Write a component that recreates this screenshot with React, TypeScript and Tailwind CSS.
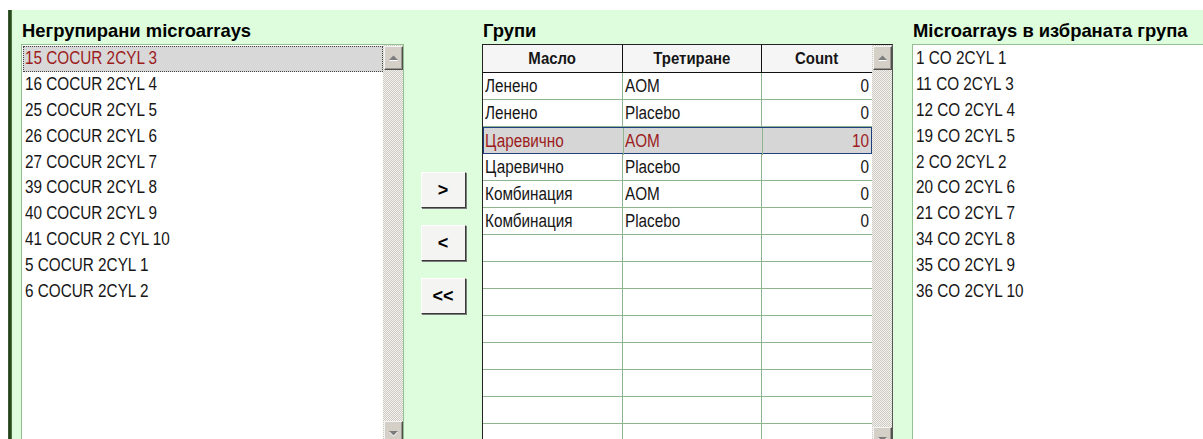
import React from "react";

const leftItems = [
  "15 COCUR 2CYL 3",
  "16 COCUR 2CYL 4",
  "25 COCUR 2CYL 5",
  "26 COCUR 2CYL 6",
  "27 COCUR 2CYL 7",
  "39 COCUR 2CYL 8",
  "40 COCUR 2CYL 9",
  "41 COCUR 2 CYL 10",
  "5 COCUR 2CYL 1",
  "6 COCUR 2CYL 2",
];

const rightItems = [
  "1 CO 2CYL 1",
  "11 CO 2CYL 3",
  "12 CO 2CYL 4",
  "19 CO 2CYL 5",
  "2 CO 2CYL 2",
  "20 CO 2CYL 6",
  "21 CO 2CYL 7",
  "34 CO 2CYL 8",
  "35 CO 2CYL 9",
  "36 CO 2CYL 10",
];

const groups = [
  { oil: "Ленено", treat: "AOM", count: 0 },
  { oil: "Ленено", treat: "Placebo", count: 0 },
  { oil: "Царевично", treat: "AOM", count: 10, selected: true },
  { oil: "Царевично", treat: "Placebo", count: 0 },
  { oil: "Комбинация", treat: "AOM", count: 0 },
  { oil: "Комбинация", treat: "Placebo", count: 0 },
];

const EMPTY_ROWS = 8;

// Narrow text: Arial metrics squeezed horizontally
function N({ children, right }: { children: React.ReactNode; right?: boolean }) {
  return (
    <span
      className={
        right
          ? "inline-block origin-right scale-x-[0.85] whitespace-nowrap"
          : "inline-block origin-left scale-x-[0.85] whitespace-nowrap"
      }
    >
      {children}
    </span>
  );
}

function ArrowButton({ dir }: { dir: "up" | "down" }) {
  return (
    <div className="flex h-[24px] w-[19px] items-center justify-center border border-t-[#f4f4f4] border-l-[#f4f4f4] border-r-[#505050] border-b-[#505050] bg-[#d4d0c8] shadow-[inset_-1px_-1px_0_#9a968e]">
      <svg width="11" height="8" viewBox="0 0 11 8">
        {dir === "up" ? (
          <>
            <path d="M1 6 L5.5 1.5 L10 6 Z" fill="#ffffff" transform="translate(0 1)" />
            <path d="M1 6 L5.5 1.5 L10 6 Z" fill="#7c7c7c" />
          </>
        ) : (
          <>
            <path d="M1 2 L5.5 6.5 L10 2 Z" fill="#ffffff" transform="translate(0 1)" />
            <path d="M1 2 L5.5 6.5 L10 2 Z" fill="#7c7c7c" />
          </>
        )}
      </svg>
    </div>
  );
}

function ScrollBar() {
  return (
    <div className="flex w-[20px] shrink-0 flex-col justify-between bg-[repeating-conic-gradient(#cdcac3_0_25%,#f3f2ef_0_50%)] bg-[length:2px_2px] pt-px pl-px">
      <ArrowButton dir="up" />
      <ArrowButton dir="down" />
    </div>
  );
}

function Heading({ children }: { children: React.ReactNode }) {
  return (
    <div className="h-[34px] shrink-0 pt-[11px] pl-px font-['Liberation_Sans',Arial,sans-serif] text-[18.4px] font-bold leading-[20px] text-black whitespace-nowrap">
      {children}
    </div>
  );
}

function SideButton({ label }: { label: string }) {
  return (
    <button className="flex h-[36px] w-[45px] items-center justify-center border border-t-white border-l-white border-r-[#3a3a3a] border-b-[#3a3a3a] bg-[#f4f4f2] shadow-[1px_1px_0_#7a7a7a] font-['Liberation_Sans',Arial,sans-serif] text-[18px] font-bold text-black">
      {label}
    </button>
  );
}

export default function App() {
  const body = "font-['Liberation_Sans',Arial,sans-serif]";
  return (
    <div className="h-[439px] w-[1203px] overflow-hidden bg-white pt-[10px] pl-[8px]">
      <div className="flex h-[436px] bg-[#ddfddd]">
        <div className="w-[4px] shrink-0 bg-[linear-gradient(to_right,#45663a,#1c3614,#5b8a4a)]" />

        {/* unassigned microarrays */}
        <div className="ml-[9px] flex w-[383px] shrink-0 flex-col">
          <Heading>Негрупирани microarrays</Heading>
          <div className="flex flex-1 border border-[#93bf93] bg-white">
            <div className={`flex-1 pt-px pl-px text-[18px] text-[#161616] ${body}`}>
              {leftItems.map((t, i) => (
                <div
                  key={t}
                  className={
                    i === 0
                      ? "flex h-[25.8px] items-center border border-dotted border-[#444] bg-[#d8d8d8] pl-px text-[#9c1c1c]"
                      : "flex h-[25.8px] items-center border border-transparent pl-px"
                  }
                >
                  <N>{t}</N>
                </div>
              ))}
            </div>
            <ScrollBar />
          </div>
        </div>

        {/* move buttons */}
        <div className="flex w-[78px] shrink-0 flex-col items-center gap-[17px] pt-[162px]">
          <SideButton label=">" />
          <SideButton label="<" />
          <SideButton label="<<" />
        </div>

        {/* groups table */}
        <div className="flex w-[411px] shrink-0 flex-col">
          <Heading>Групи</Heading>
          <div className="flex flex-1 border border-t-[#222] border-l-[#222] border-r-[#555] border-b-[#555] bg-white">
            <div className={`flex-1 text-[18px] text-[#161616] ${body}`}>
              <div className="grid h-[28px] grid-cols-[140px_139px_1fr] border-b border-[#111] bg-[#f5f5f5] text-[17px] font-bold">
                <div className="flex items-center justify-center border-r border-[#111]">
                  <span className="inline-block scale-x-[0.88]">Масло</span>
                </div>
                <div className="flex items-center justify-center border-r border-[#111]">
                  <span className="inline-block scale-x-[0.88]">Третиране</span>
                </div>
                <div className="flex items-center justify-center">
                  <span className="inline-block scale-x-[0.88]">Count</span>
                </div>
              </div>
              {groups.map((g, i) =>
                g.selected ? (
                  <div
                    key={i}
                    className="grid h-[27px] grid-cols-[140px_139px_1fr] border border-[#1e3f80] bg-[#d6d6d6] text-[#9c1c1c]"
                  >
                    <div className="flex items-center border-r border-[#8fb58f] pl-px"><N>{g.oil}</N></div>
                    <div className="flex items-center border-r border-[#8fb58f] pl-px"><N>{g.treat}</N></div>
                    <div className="flex items-center justify-end pr-[2px]"><N right>{g.count}</N></div>
                  </div>
                ) : (
                  <div
                    key={i}
                    className="grid h-[27px] grid-cols-[140px_139px_1fr] border-b border-[#8fb58f]"
                  >
                    <div className="flex items-center border-r border-[#8fb58f] pl-[2px]"><N>{g.oil}</N></div>
                    <div className="flex items-center border-r border-[#8fb58f] pl-[2px]"><N>{g.treat}</N></div>
                    <div className="flex items-center justify-end pr-[3px]"><N right>{g.count}</N></div>
                  </div>
                )
              )}
              {Array.from({ length: EMPTY_ROWS }).map((_, i) => (
                <div key={`e${i}`} className="grid h-[27px] grid-cols-[140px_139px_1fr] border-b border-[#8fb58f]">
                  <div className="border-r border-[#8fb58f]" />
                  <div className="border-r border-[#8fb58f]" />
                  <div />
                </div>
              ))}
            </div>
            <ScrollBar />
          </div>
        </div>

        {/* microarrays in selected group */}
        <div className="ml-[19px] flex w-[320px] shrink-0 flex-col">
          <Heading>Microarrays в избраната група</Heading>
          <div className="flex-1 border border-[#93bf93] bg-white">
            <div className={`pt-px pl-px text-[18px] text-[#161616] ${body}`}>
              {rightItems.map((t) => (
                <div key={t} className="flex h-[25.8px] items-center border border-transparent pl-px">
                  <N>{t}</N>
                </div>
              ))}
            </div>
          </div>
        </div>
      </div>
    </div>
  );
}
